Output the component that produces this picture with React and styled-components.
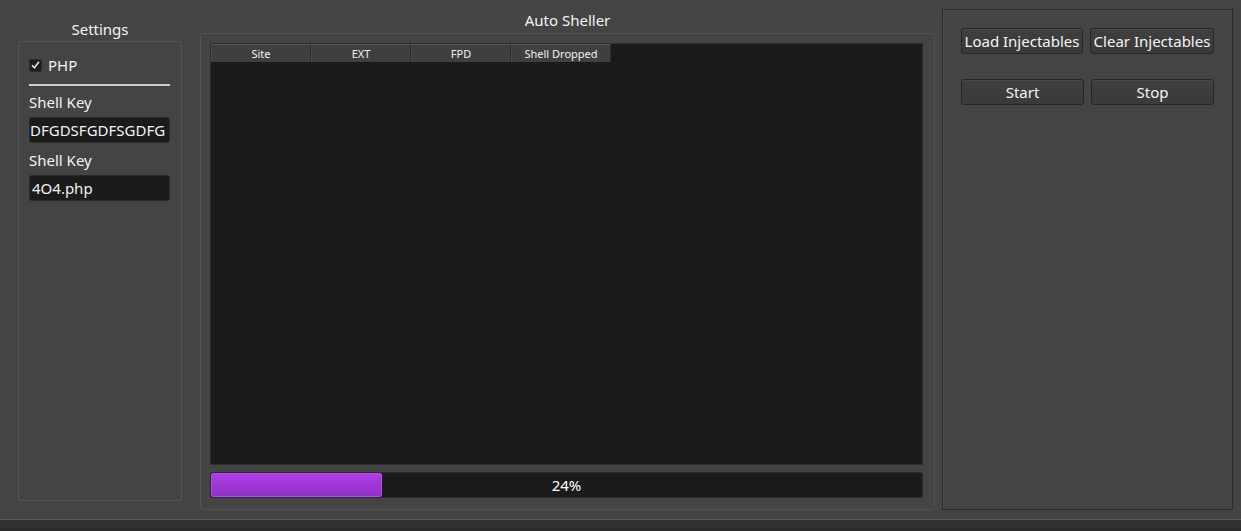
import styled, { createGlobalStyle } from 'styled-components';

const Global = createGlobalStyle`
  html, body {
    margin: 0;
    padding: 0;
    background: #444444;
  }
  body {
    font-family: 'Noto Sans', 'Open Sans', sans-serif;
    color: #f2f2f2;
  }
`;

const columns = ['Site', 'EXT', 'FPD', 'Shell Dropped'];

export default function App() {
  const progress = 24;

  return (
    <>
      <Global />
      <Window>
        <Main>
          <Column $width={164} $top={18}>
            <Title $gap={1}>Settings</Title>
            <Group $height={460}>
              <CheckRow>
                <CheckBox>
                  <svg width="9" height="8" viewBox="0 0 9 8">
                    <path d="M1 4.2 L3.4 6.8 L8 0.8" stroke="#f0f0f0" strokeWidth="1.4" fill="none" />
                  </svg>
                </CheckBox>
                PHP
              </CheckRow>
              <Separator />
              <Label>Shell Key</Label>
              <Input $pad={0}>DFGDSFGDFSGDFG</Input>
              <Label>Shell Key</Label>
              <Input $pad={2}>4O4.php</Input>
            </Group>
          </Column>

          <Column $width={735} $top={9}>
            <Title $gap={2}>Auto Sheller</Title>
            <CenterGroup>
              <Table>
                <Header>
                  {columns.map((c) => (
                    <HeadCell key={c}>{c}</HeadCell>
                  ))}
                </Header>
              </Table>
              <Progress>
                <Fill style={{ width: `${progress}%` }} />
                <Percent>{progress}%</Percent>
              </Progress>
            </CenterGroup>
          </Column>

          <RightGroup>
            <ButtonRow>
              <Button $w={123}>Load Injectables</Button>
              <Button $w={125}>Clear Injectables</Button>
            </ButtonRow>
            <ButtonRow>
              <Button $w={124}>Start</Button>
              <Button $w={124}>Stop</Button>
            </ButtonRow>
          </RightGroup>
        </Main>
        <StatusBar />
      </Window>
    </>
  );
}

const Window = styled.div`
  width: 1241px;
  height: 531px;
  display: flex;
  flex-direction: column;
  overflow: hidden;
`;

const Main = styled.div`
  height: 519px;
  display: flex;
  padding-left: 18px;
  box-sizing: border-box;
`;

const Column = styled.div`
  width: ${({ $width }) => $width}px;
  padding-top: ${({ $top }) => $top}px;
  margin-right: ${({ $width }) => ($width > 200 ? 7 : 18)}px;
  display: flex;
  flex-direction: column;
`;

const Title = styled.div`
  height: 22px;
  line-height: 22px;
  text-align: center;
  font-size: 15px;
  color: #f4f4f4;
  margin-bottom: ${({ $gap }) => $gap}px;
`;

const Group = styled.div`
  height: ${({ $height }) => $height}px;
  box-sizing: border-box;
  border: 1px solid #555555;
  border-radius: 3px;
  padding: 14px 11px 0 10px;
  display: flex;
  flex-direction: column;
`;

const CheckRow = styled.div`
  display: flex;
  align-items: center;
  gap: 6px;
  height: 18px;
  font-size: 15px;
`;

const CheckBox = styled.div`
  width: 13px;
  height: 13px;
  box-sizing: border-box;
  background: #1d1d1d;
  border: 1px solid #2c2c2c;
  border-radius: 2px;
  display: flex;
  align-items: center;
  justify-content: center;
`;

const Separator = styled.div`
  height: 2px;
  background: #cfcfcf;
  margin: 10px 0 5px;
`;

const Label = styled.div`
  font-size: 15px;
  height: 22px;
  line-height: 22px;
  margin-bottom: 4px;
`;

const Input = styled.div`
  height: 26px;
  box-sizing: border-box;
  background: #1b1b1b;
  border: 1px solid #2a2a2a;
  border-radius: 3px;
  font-size: 15px;
  line-height: 24px;
  padding-left: ${({ $pad }) => $pad}px;
  white-space: nowrap;
  overflow: hidden;
  margin-bottom: 6px;
`;

const CenterGroup = styled.div`
  height: 477px;
  box-sizing: border-box;
  border: 1px solid #525252;
  border-radius: 3px;
  padding: 9px 11px 11px 9px;
  display: flex;
  flex-direction: column;
  gap: 7px;
`;

const Table = styled.div`
  height: 422px;
  background: #1b1b1b;
  border: 1px solid #2e2e2e;
  box-sizing: border-box;
`;

const Header = styled.div`
  display: flex;
  height: 18px;
`;

const HeadCell = styled.div`
  width: 100px;
  box-sizing: border-box;
  background: #3f3f3f;
  border-top: 1px solid #575757;
  border-right: 1px solid #2c2c2c;
  border-left: 1px solid #4a4a4a;
  font-size: 11px;
  line-height: 17px;
  text-align: center;
  color: #f2f2f2;
`;

const Progress = styled.div`
  position: relative;
  height: 26px;
  box-sizing: border-box;
  background: #1b1b1b;
  border: 1px solid #2b2b2b;
  border-radius: 3px;
`;

const Fill = styled.div`
  height: 100%;
  box-sizing: border-box;
  background: linear-gradient(#ad3de6, #9232c9);
  border: 1px solid #b64ce8;
  border-radius: 2px;
`;

const Percent = styled.div`
  position: absolute;
  inset: 0;
  text-align: center;
  line-height: 25px;
  font-size: 15px;
  color: #ffffff;
`;

const RightGroup = styled.div`
  margin-top: 9px;
  width: 291px;
  height: 501px;
  box-sizing: border-box;
  border: 1px solid #2a2a2a;
  box-shadow: inset 1px 1px 0 #4d4d4d;
  padding: 18px 18px;
  display: flex;
  flex-direction: column;
  gap: 25px;
`;

const ButtonRow = styled.div`
  display: flex;
  gap: 7px;
`;

const Button = styled.div`
  width: ${({ $w }) => $w}px;
  height: 26px;
  box-sizing: border-box;
  background: linear-gradient(#3f3f3f, #3a3a3a);
  border: 1px solid #262626;
  border-radius: 3px;
  box-shadow: inset 0 1px 0 #4a4a4a;
  font-size: 15px;
  line-height: 24px;
  text-align: center;
  white-space: nowrap;
  color: #f4f4f4;
`;

const StatusBar = styled.div`
  flex: 1;
  border-top: 1px solid #5a5a5a;
  background: linear-gradient(#323232 0, #323232 8px, #2a2a2a 8px);
`;
